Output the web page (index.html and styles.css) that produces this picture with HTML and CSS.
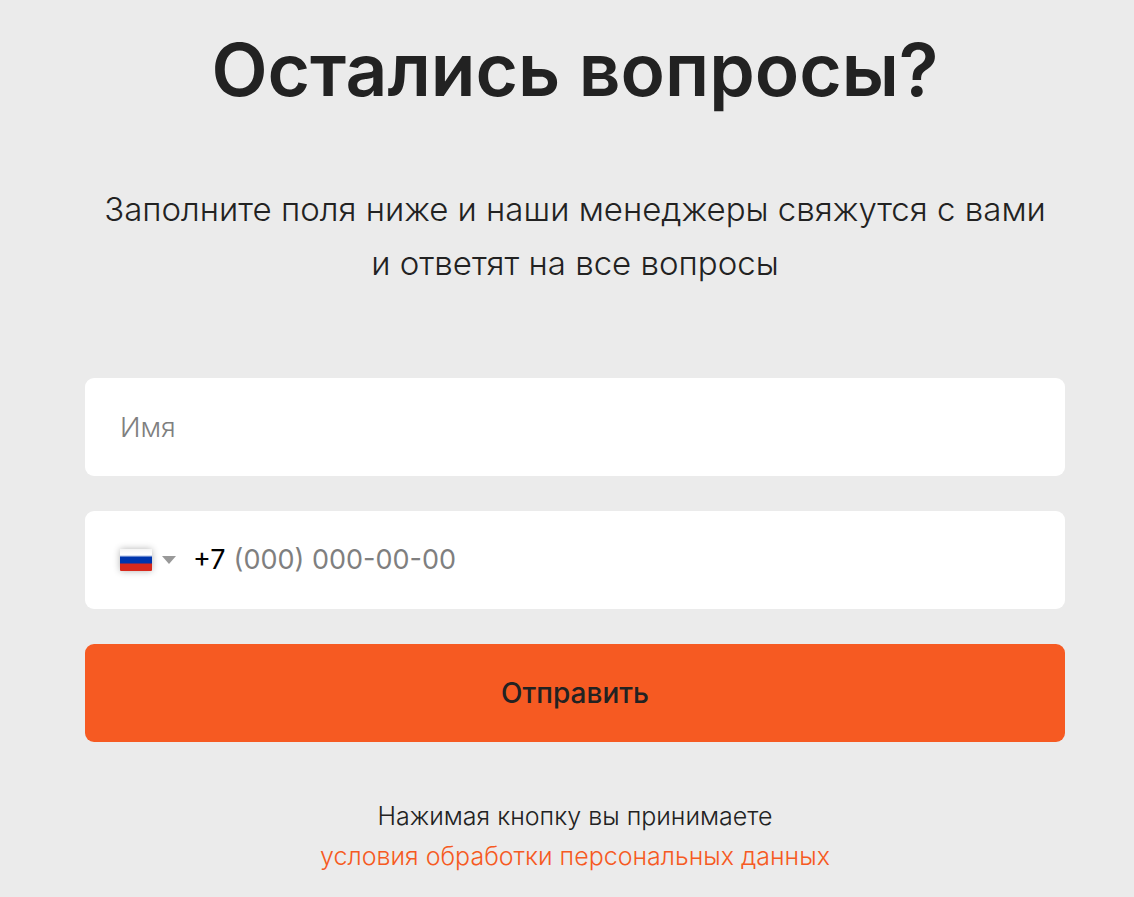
FILE: index.html
```html
<!DOCTYPE html>
<html lang="ru">
<head>
<meta charset="utf-8">
<meta name="viewport" content="width=device-width, initial-scale=1">
<title>Остались вопросы?</title>
<link rel="stylesheet" href="styles.css">
</head>
<body>
<main class="contact">
  <h1 class="title">Остались вопросы?</h1>
  <p class="lead">Заполните поля ниже и наши менеджеры свяжутся с вами<br>и ответят на все вопросы</p>
  <form class="form">
    <input class="field name" type="text" placeholder="Имя" aria-label="Имя">
    <div class="field phone">
      <button class="country" type="button" aria-label="Выбрать страну">
        <span class="flag"></span>
        <span class="caret"></span>
      </button>
      <label class="code" for="phone">+7</label>
      <input class="number" id="phone" type="tel" placeholder="(000) 000-00-00">
    </div>
    <button class="submit" type="submit">Отправить</button>
  </form>
  <p class="terms">Нажимая кнопку вы принимаете<br><a class="link" href="#">условия обработки персональных данных</a></p>
</main>
</body>
</html>
```
FILE: styles.css
```css
* { box-sizing: border-box; }
body {
  margin: 0;
  background: #ebebeb;
  color: #222;
  font-family: Inter, "Open Sans", sans-serif;
}
.contact {
  display: flex;
  flex-direction: column;
  padding: 20px 69px 20px 85px;
  text-align: center;
}
.title {
  margin: 0;
  font-size: 73px;
  line-height: 100px;
  font-weight: 600;
}
.lead {
  margin: 62px 0 0;
  font-size: 33px;
  line-height: 54px;
  font-weight: 300;
}
.form {
  display: flex;
  flex-direction: column;
  gap: 35px;
  margin-top: 88px;
}
.field, .submit {
  width: 100%;
  height: 98px;
  border: 0;
  border-radius: 9px;
  padding: 0 35px;
  font: 300 27px/40px Inter, "Open Sans", sans-serif;
}
.field { background: #fff; color: #000; }
::placeholder { color: #7f7f7f; opacity: 1; }
.phone { display: flex; align-items: center; font-weight: 400; }
.country {
  display: flex;
  align-items: center;
  gap: 10px;
  padding: 0;
  border: 0;
  background: none;
}
.flag {
  width: 32px;
  height: 22px;
  border-radius: 1px;
  background: linear-gradient(#f5f5f5, #fff 25%, #fff 28%, #0035ad 38%, #0035ad 62%, #d8291c 70%);
  box-shadow: 0 0 7px rgba(0, 0, 0, 0.3);
}
.caret {
  border: 7px solid transparent;
  border-top: 8px solid #999;
  border-bottom: 0;
}
.code { margin: 0 8px 0 17px; }
.number {
  flex: 1;
  min-width: 0;
  padding: 0;
  border: 0;
  background: none;
  font: inherit;
}
.submit {
  background: #f65a22;
  color: #222;
  font-size: 28px;
  font-weight: 500;
}
.terms {
  margin: 54px 0 0;
  font-size: 25px;
  line-height: 40px;
  font-weight: 300;
}
.link { color: #f65a22; text-decoration: none; }
```
